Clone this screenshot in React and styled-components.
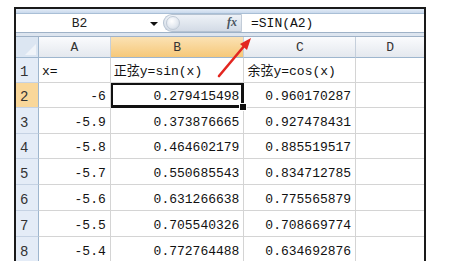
import React from 'react'
import styled, { createGlobalStyle } from 'styled-components'

const GlobalStyle = createGlobalStyle`
  body {
    margin: 0;
    background: #ffffff;
    font-family: "Liberation Mono", "Noto Sans CJK SC", monospace;
  }
`

const columns = [
  { key: 'A', width: 72 },
  { key: 'B', width: 134 },
  { key: 'C', width: 112 },
  { key: 'D', width: 68 },
]

const rows = [
  { n: 1, h: 25, a: 'x=', b: '正弦y=sin(x)', c: '余弦y=cos(x)', text: true },
  { n: 2, h: 25, a: '-6', b: '0.279415498', c: '0.960170287' },
  { n: 3, h: 26, a: '-5.9', b: '0.373876665', c: '0.927478431' },
  { n: 4, h: 25, a: '-5.8', b: '0.464602179', c: '0.885519517' },
  { n: 5, h: 26, a: '-5.7', b: '0.550685543', c: '0.834712785' },
  { n: 6, h: 26, a: '-5.6', b: '0.631266638', c: '0.775565879' },
  { n: 7, h: 26, a: '-5.5', b: '0.705540326', c: '0.708669774' },
  { n: 8, h: 26, a: '-5.4', b: '0.772764488', c: '0.634692876' },
]

const App = () => {
  return (
    <>
      <GlobalStyle />
      <Frame>
        <TopBand />
        <FormulaBar>
          <NameBox>
            <span>B2</span>
            <DropArrow />
          </NameBox>
          <FxButton>
            <Knob />
            <Fx>fx</Fx>
          </FxButton>
          <FormulaInput>=SIN(A2)</FormulaInput>
        </FormulaBar>
        <GapBand />
        <Sheet>
          <HeaderRow>
            <Corner>
              <CornerTriangle />
            </Corner>
            {columns.map(col => (
              <ColHeader key={col.key} width={col.width} selected={col.key === 'B'}>
                {col.key}
              </ColHeader>
            ))}
          </HeaderRow>
          {rows.map(row => (
            <Row key={row.n} h={row.h}>
              <RowHeader selected={row.n === 2}>{row.n}</RowHeader>
              <Cell width={72} align={row.text ? 'left' : 'right'}>{row.a}</Cell>
              <Cell width={134} align={row.text ? 'left' : 'right'} active={row.n === 2}>
                {row.b}
                {row.n === 2 && <FillHandle />}
              </Cell>
              <Cell width={112} align={row.text ? 'left' : 'right'}>{row.c}</Cell>
              <Cell width={68} last />
            </Row>
          ))}
          <Arrow width="40" height="44" viewBox="0 0 40 44">
            <line x1="3" y1="40" x2="29" y2="9" stroke="#e32620" strokeWidth="2.6" strokeLinecap="round" />
            <polygon points="35,2 24,8 31,14" fill="#e32620" />
          </Arrow>
        </Sheet>
      </Frame>
    </>
  )
}

const Frame = styled.div`
  position: relative;
  margin: 7px 0 0 14px;
  width: 412px;
  height: 254px;
  overflow: hidden;
  border-top: 2px solid #1a1a1a;
  border-left: 2px solid #1a1a1a;
  border-right: 2px solid #1a1a1a;
  box-sizing: border-box;
`

const TopBand = styled.div`
  height: 4px;
  background: linear-gradient(#e3ecf7, #c9d9ec);
  border-bottom: 1px solid #a9bfd6;
`

const FormulaBar = styled.div`
  display: flex;
  height: 18px;
  background: #ffffff;
  border-bottom: 1px solid #9fb2c7;
`

const NameBox = styled.div`
  position: relative;
  width: 147px;
  display: flex;
  align-items: center;
  justify-content: center;
  font-size: 13px;
  color: #222;
  span {
    margin-left: -20px;
  }
`

const DropArrow = styled.div`
  position: absolute;
  right: 5px;
  top: 8px;
  width: 0;
  height: 0;
  border-left: 4px solid transparent;
  border-right: 4px solid transparent;
  border-top: 4px solid #111;
`

const FxButton = styled.div`
  position: relative;
  width: 79px;
  height: 18px;
  box-sizing: border-box;
  border-radius: 9px 0 0 9px;
  background: linear-gradient(#eef2f7, #d3dbe6);
  border: 1px solid #b5c2d1;
  border-right: 1px solid #c2ccd8;
`

const Knob = styled.div`
  position: absolute;
  left: 2px;
  top: 1px;
  width: 14px;
  height: 14px;
  border-radius: 50%;
  background: radial-gradient(circle at 40% 35%, #ffffff, #e1e7ef 60%, #c3ceda);
  border: 1px solid #c0cad6;
  box-sizing: border-box;
`

const Fx = styled.span`
  position: absolute;
  right: 4px;
  top: 0px;
  font-family: "Liberation Serif", serif;
  font-style: italic;
  font-weight: bold;
  font-size: 12px;
  color: #4a5560;
`

const FormulaInput = styled.div`
  flex: 1;
  display: flex;
  align-items: center;
  padding-left: 9px;
  font-size: 13px;
  color: #111;
`

const GapBand = styled.div`
  height: 3px;
  background: #dde5ef;
  border-bottom: 1px solid #9fb2c7;
`

const Sheet = styled.div`
  position: relative;
`

const HeaderRow = styled.div`
  display: flex;
  height: 21px;
`

const Corner = styled.div`
  position: relative;
  width: 23px;
  box-sizing: border-box;
  background: #dce6f2;
  border-right: 1px solid #9eb6ce;
  border-bottom: 1px solid #9eb6ce;
`

const CornerTriangle = styled.div`
  position: absolute;
  right: 2px;
  bottom: 2px;
  width: 0;
  height: 0;
  border-left: 11px solid transparent;
  border-bottom: 11px solid #f0f4f9;
`

const ColHeader = styled.div`
  width: ${p => p.width}px;
  box-sizing: border-box;
  display: flex;
  align-items: center;
  justify-content: center;
  font-size: 13px;
  color: #333;
  background: ${p => p.selected
    ? 'linear-gradient(#fbe2b4, #f6c879)'
    : 'linear-gradient(#fafbfd, #e4e8ee)'};
  border-right: 1px solid #c5cfdb;
  border-bottom: 1px solid #9eb6ce;
  &:last-child {
    border-right: none;
  }
`

const Row = styled.div`
  display: flex;
  height: ${p => p.h}px;
`

const RowHeader = styled.div`
  width: 23px;
  box-sizing: border-box;
  display: flex;
  align-items: flex-end;
  padding: 0 0 2px 4px;
  font-size: 14px;
  color: #333;
  background: ${p => p.selected ? '#f9d79a' : '#e4ecf7'};
  border-right: 1px solid #9eb6ce;
  border-bottom: 1px solid #c5d2e3;
`

const Cell = styled.div`
  position: relative;
  width: ${p => p.width}px;
  box-sizing: border-box;
  display: flex;
  align-items: flex-end;
  justify-content: ${p => p.align === 'left' ? 'flex-start' : 'flex-end'};
  padding: 0 4px 3px 3px;
  font-size: 13px;
  color: #111;
  white-space: nowrap;
  border-right: ${p => p.last ? 'none' : '1px solid #d4d4d4'};
  border-bottom: 1px solid #d4d4d4;
  ${p => p.active && `
    box-shadow: inset 0 0 0 2px #111;
    border-right-color: #111;
    border-bottom-color: #111;
  `}
`

const FillHandle = styled.div`
  position: absolute;
  right: -4px;
  bottom: -4px;
  width: 6px;
  height: 6px;
  background: #111;
  border: 1px solid #fff;
  z-index: 2;
`

const Arrow = styled.svg`
  position: absolute;
  left: 200px;
  top: -1px;
  overflow: visible;
`

export default App
